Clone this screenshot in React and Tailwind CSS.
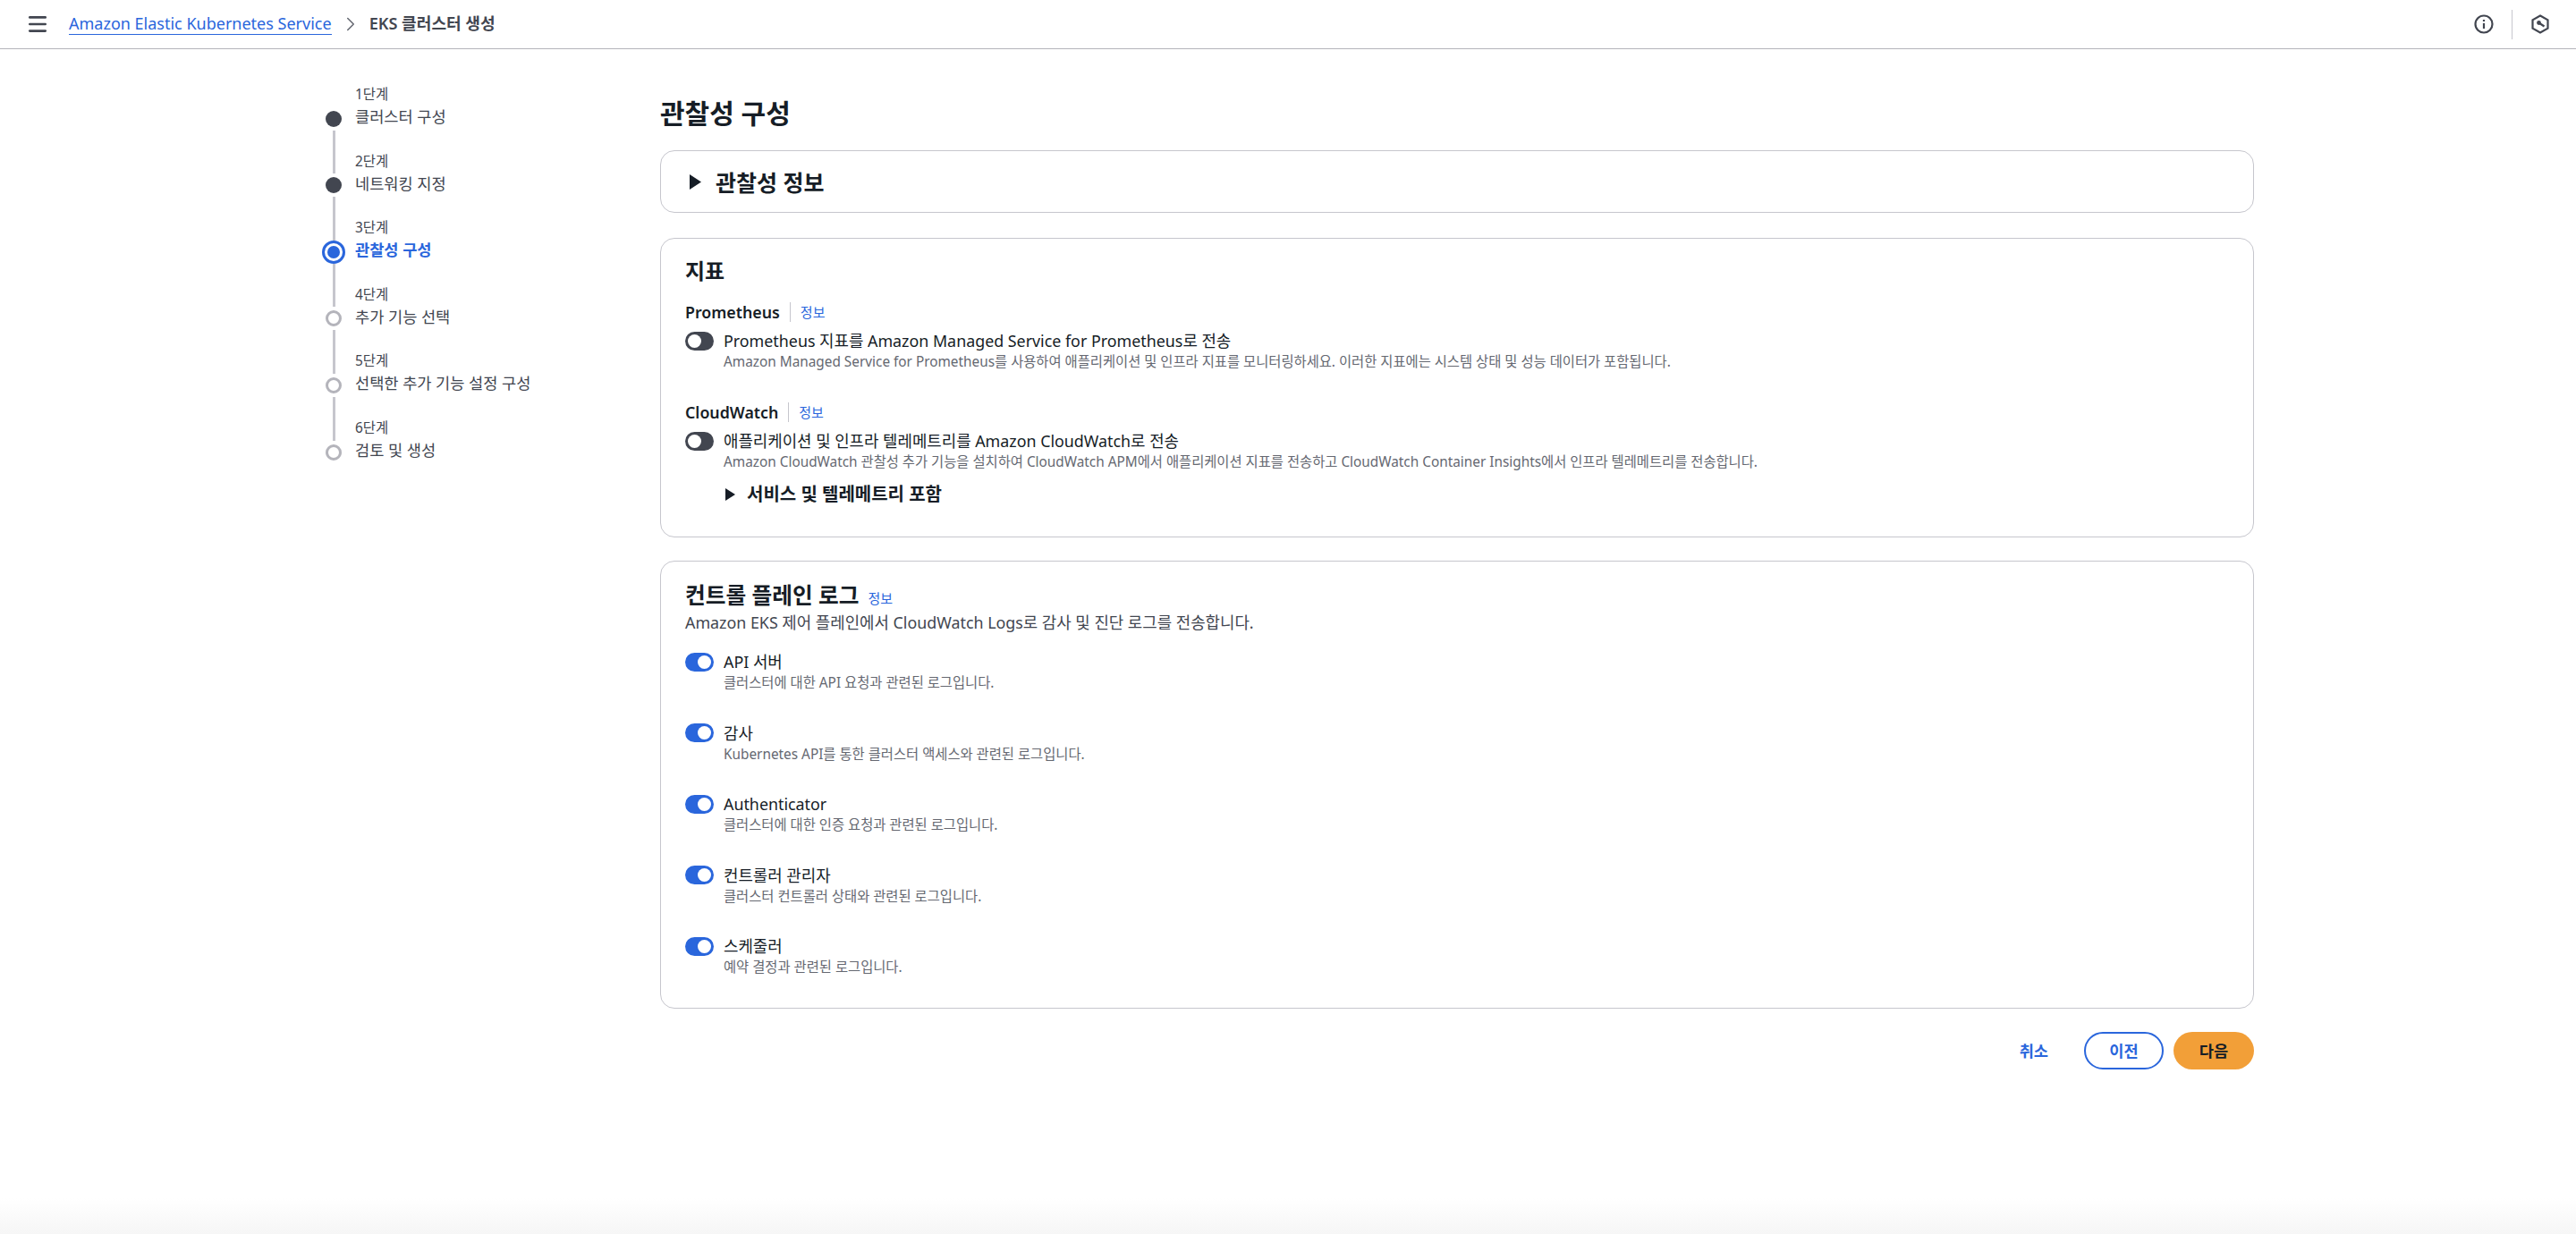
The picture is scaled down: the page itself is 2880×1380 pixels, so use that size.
import { Menu, ChevronRight } from 'lucide-react';

const FONT = "font-['Noto_Sans','Noto_Sans_CJK_KR',sans-serif]";

const STEPS = [
  { label: '1단계', title: '클러스터 구성', state: 'done' },
  { label: '2단계', title: '네트워킹 지정', state: 'done' },
  { label: '3단계', title: '관찰성 구성', state: 'current' },
  { label: '4단계', title: '추가 기능 선택', state: 'todo' },
  { label: '5단계', title: '선택한 추가 기능 설정 구성', state: 'todo' },
  { label: '6단계', title: '검토 및 생성', state: 'todo' },
];

const LOGS = [
  { title: 'API 서버', desc: '클러스터에 대한 API 요청과 관련된 로그입니다.' },
  { title: '감사', desc: 'Kubernetes API를 통한 클러스터 액세스와 관련된 로그입니다.' },
  { title: 'Authenticator', desc: '클러스터에 대한 인증 요청과 관련된 로그입니다.' },
  { title: '컨트롤러 관리자', desc: '클러스터 컨트롤러 상태와 관련된 로그입니다.' },
  { title: '스케줄러', desc: '예약 결정과 관련된 로그입니다.' },
];

function Caret({ className }) {
  return (
    <svg viewBox="0 0 12 16" className={className} fill="currentColor" preserveAspectRatio="none">
      <path d="M0 0l12 8-12 8z" />
    </svg>
  );
}

function StepDot({ state }) {
  if (state === 'done') return <span className="h-[18px] w-[18px] rounded-full bg-[#424650]" />;
  if (state === 'current') {
    return (
      <span className="flex h-[26px] w-[26px] items-center justify-center rounded-full border-[3px] border-[#2a66dc]">
        <span className="h-[14px] w-[14px] rounded-full bg-[#2a66dc]" />
      </span>
    );
  }
  return <span className="h-[18px] w-[18px] rounded-full border-[3px] border-[#b4b4bb] bg-white" />;
}

function Step({ step, first }) {
  return (
    <div className="flex h-[74.6px] gap-[11px]">
      <div className="flex w-[26px] flex-col items-center">
        <div className={first ? 'flex-1' : 'w-[3px] flex-1 bg-[#c6c6cd]'} />
        <div className="flex h-[26px] items-center justify-center">
          <StepDot state={step.state} />
        </div>
      </div>
      <div className="flex flex-col justify-end">
        <div className="text-[15.4px] leading-[22px] text-[#424650]">{step.label}</div>
        <div
          className={
            step.state === 'current'
              ? 'pb-[1.5px] text-[17.6px] leading-[27px] font-semibold text-[#2a66dc]'
              : 'pb-[1.5px] text-[17.6px] leading-[27px] text-[#424650]'
          }
        >
          {step.title}
        </div>
      </div>
    </div>
  );
}

function Toggle({ on }) {
  return (
    <span
      className={
        on
          ? 'flex h-[21px] w-[32px] shrink-0 items-center justify-end rounded-full bg-[#2a66dc] px-[3px]'
          : 'flex h-[21px] w-[32px] shrink-0 items-center rounded-full bg-[#424650] px-[3px]'
      }
    >
      <span className="h-[15px] w-[15px] rounded-full bg-white" />
    </span>
  );
}

function ToggleRow({ on, title, desc }) {
  return (
    <div className="flex gap-[11px]">
      <div className="flex h-[24px] items-center">
        <Toggle on={on} />
      </div>
      <div>
        <div className="text-[17.85px] leading-[24px] text-[#161d26]">{title}</div>
        <div className="text-[15.35px] leading-[23px] text-[#656871]">{desc}</div>
      </div>
    </div>
  );
}

function FieldLabel({ children }) {
  return (
    <div className="flex h-[24px] items-center">
      <span className="text-[17.8px] font-semibold text-[#161d26]">{children}</span>
      <span className="mx-[11px] h-[22px] w-px bg-[#c6c6cd]" />
      <span className="text-[15px] text-[#2a66dc]">정보</span>
    </div>
  );
}

function Card({ className, children }) {
  return <div className={`rounded-[16px] border border-[#c6c6cd] bg-white ${className}`}>{children}</div>;
}

export default function App() {
  return (
    <div className={`flex h-[1380px] flex-col overflow-hidden bg-white ${FONT}`}>
      {/* top bar */}
      <header className="flex h-[55px] shrink-0 items-center border-b border-[#b4b4bb] pr-[28px] pl-[29px]">
        <Menu size={26} strokeWidth={2.5} className="text-[#424650]" />
        <a className="ml-[22px] border-b border-[#2a66dc] text-[18px] leading-[23px] text-[#2a66dc]">
          Amazon Elastic Kubernetes Service
        </a>
        <ChevronRight size={26} strokeWidth={1.4} className="mx-[8px] text-[#656871]" />
        <span className="text-[18.1px] font-semibold text-[#424650]">EKS 클러스터 생성</span>
        <div className="ml-auto flex items-center">
          <svg viewBox="0 0 24 24" className="h-[24px] w-[24px] text-[#424650]" fill="none" stroke="currentColor" strokeWidth="2.2">
            <circle cx="12" cy="12" r="9.5" />
            <path d="M12 11v6" />
            <path d="M12 7v2" />
          </svg>
          <span className="mx-[19px] h-[33px] w-px bg-[#c6c6cd]" />
          <svg viewBox="0 0 24 24" className="h-[24px] w-[24px] text-[#424650]" fill="none" stroke="currentColor" strokeWidth="2.2">
            <path d="M12 2.5l8.5 4.8v9.4L12 21.5l-8.5-4.8V7.3z" />
            <path d="M10.5 10.5l6 4" />
            <circle cx="10.5" cy="10.5" r="2.4" fill="currentColor" stroke="none" />
          </svg>
        </div>
      </header>

      <div className="flex flex-1 pt-[16px] pl-[360px]">
        {/* wizard steps */}
        <nav className="w-[378px] shrink-0">
          {STEPS.map((step, i) => (
            <Step key={step.label} step={step} first={i === 0} />
          ))}
        </nav>

        {/* page content */}
        <main className="w-[1782px]">
          <h1 className="mt-[36px] text-[30px] leading-[40px] font-semibold text-[#161d26]">관찰성 구성</h1>

          <Card className="mt-[21px] flex h-[70px] items-center gap-[16px] px-[32px]">
            <Caret className="h-[17px] w-[13px] text-[#161d26]" />
            <span className="pt-[3px] text-[25px] font-semibold text-[#161d26]">관찰성 정보</span>
          </Card>

          <Card className="mt-[28px] h-[335px] px-[27px] pt-[19px]">
            <h2 className="text-[24px] leading-[34px] font-semibold text-[#161d26]">지표</h2>
            <div className="mt-[17px]">
              <FieldLabel>Prometheus</FieldLabel>
              <div className="mt-[8px]">
                <ToggleRow
                  title="Prometheus 지표를 Amazon Managed Service for Prometheus로 전송"
                  desc="Amazon Managed Service for Prometheus를 사용하여 애플리케이션 및 인프라 지표를 모니터링하세요. 이러한 지표에는 시스템 상태 및 성능 데이터가 포함됩니다."
                />
              </div>
            </div>
            <div className="mt-[33px]">
              <FieldLabel>CloudWatch</FieldLabel>
              <div className="mt-[8px]">
                <ToggleRow
                  title="애플리케이션 및 인프라 텔레메트리를 Amazon CloudWatch로 전송"
                  desc="Amazon CloudWatch 관찰성 추가 기능을 설치하여 CloudWatch APM에서 애플리케이션 지표를 전송하고 CloudWatch Container Insights에서 인프라 텔레메트리를 전송합니다."
                />
              </div>
              <div className="mt-[11px] ml-[45px] flex items-center gap-[13px]">
                <Caret className="h-[14px] w-[11px] text-[#161d26]" />
                <span className="text-[20px] leading-[28px] font-semibold text-[#161d26]">서비스 및 텔레메트리 포함</span>
              </div>
            </div>
          </Card>

          <Card className="mt-[26px] h-[501px] px-[27px] pt-[20px]">
            <div className="flex items-baseline gap-[10px]">
              <h2 className="text-[24.7px] leading-[36px] font-semibold text-[#161d26]">컨트롤 플레인 로그</h2>
              <span className="text-[15px] text-[#2a66dc]">정보</span>
            </div>
            <div className="text-[17.85px] leading-[24px] text-[#424650]">
              Amazon EKS 제어 플레인에서 CloudWatch Logs로 감사 및 진단 로그를 전송합니다.
            </div>
            <div className="mt-[20px] flex flex-col gap-[32.5px]">
              {LOGS.map((log) => (
                <ToggleRow key={log.title} on title={log.title} desc={log.desc} />
              ))}
            </div>
          </Card>

          <div className="mt-[26px] flex items-center justify-end">
            <button className="mr-[40px] text-[17.6px] font-semibold text-[#2a66dc]">취소</button>
            <button className="mr-[11px] h-[42px] w-[89px] rounded-full border-2 border-[#2a66dc] text-[17.6px] font-semibold text-[#2a66dc]">
              이전
            </button>
            <button className="h-[42px] w-[90px] rounded-full bg-[#f29f38] text-[17.6px] font-semibold text-[#161d26]">
              다음
            </button>
          </div>
        </main>
      </div>

      <div className="h-[40px] shrink-0 bg-gradient-to-b from-white to-[#f6f6f6]" />
    </div>
  );
}
